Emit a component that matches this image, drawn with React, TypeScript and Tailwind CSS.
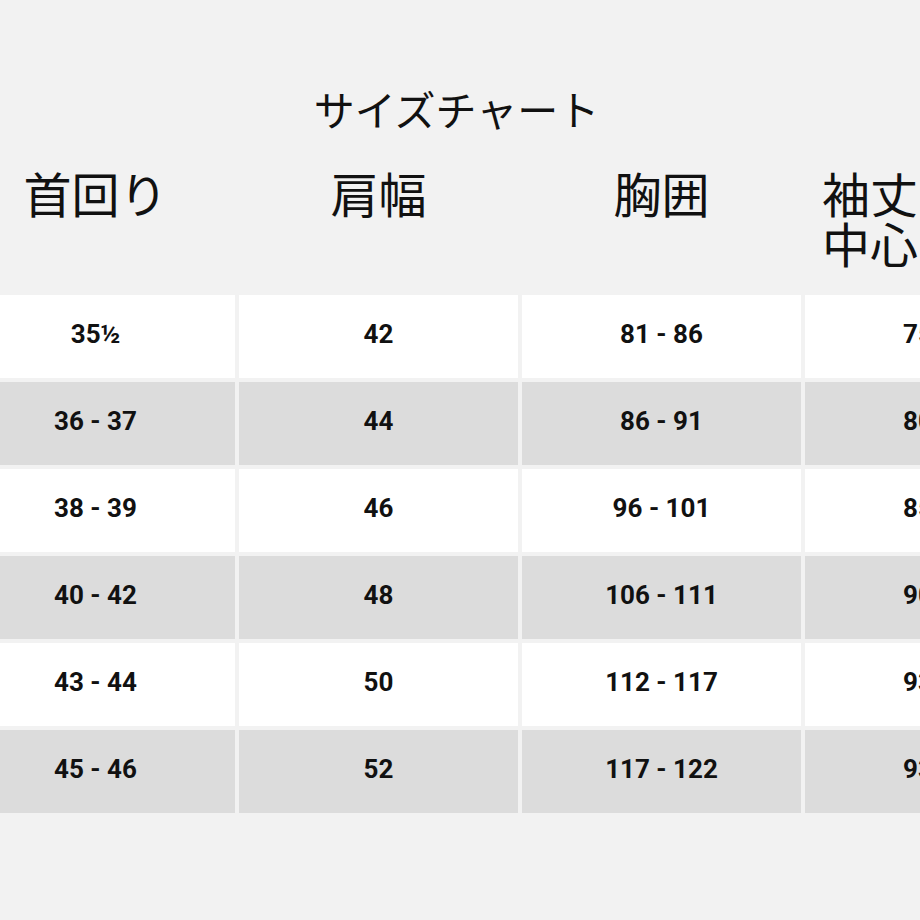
const headers = ['首回り', '肩幅', '胸囲']

const rows: string[][] = [
  ['35½', '42', '81 - 86', '75 - 79'],
  ['36 - 37', '44', '86 - 91', '80 - 84'],
  ['38 - 39', '46', '96 - 101', '85 - 89'],
  ['40 - 42', '48', '106 - 111', '90 - 93'],
  ['43 - 44', '50', '112 - 117', '93 - 96'],
  ['45 - 46', '52', '117 - 122', '93 - 96'],
]

export default function App() {
  return (
    <div className="w-[920px] h-[920px] overflow-hidden bg-[#f2f2f2] text-[#111] font-['Noto_Sans_CJK_JP','Noto_Sans',sans-serif]">
      <div className="pt-[83px] pr-[7px] text-center text-[41px] leading-[50px]">サイズチャート</div>

      <div className="mt-[34px] ml-[-44px] grid grid-cols-[repeat(4,279px)] gap-x-[4px] text-[48px] leading-[50px]">
        {headers.map((h) => (
          <div key={h} className="text-center">
            {h}
          </div>
        ))}
        <div className="pl-[17px] text-left whitespace-nowrap">
          袖丈（背
          <br />
          中心から）
        </div>
      </div>

      <div className="mt-[28px] ml-[-44px] grid grid-cols-[repeat(4,279px)] gap-[4px] font-['Roboto','Liberation_Sans',sans-serif] font-bold text-[26px]">
        {rows.map((row, i) =>
          row.map((cell, j) => (
            <div
              key={`${i}-${j}`}
              className={`h-[83px] pb-[4px] flex items-center justify-center ${i % 2 === 0 ? 'bg-white' : 'bg-[#dcdcdc]'}`}
            >
              {cell}
            </div>
          )),
        )}
      </div>
    </div>
  )
}
